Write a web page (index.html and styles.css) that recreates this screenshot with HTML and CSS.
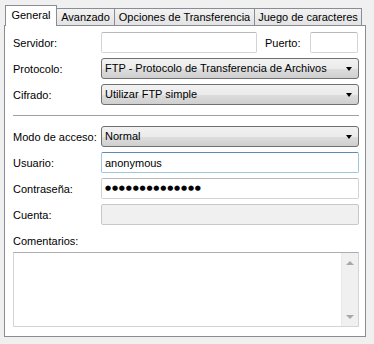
FILE: index.html
```html
<!DOCTYPE html>
<html lang="es">
<head>
  <meta charset="UTF-8">
  <title>Sitio FTP - General</title>
  <link rel="stylesheet" href="styles.css">
</head>
<body>
  <div class="tabs">
    <div class="tab active">General</div>
    <div class="tab">Avanzado</div>
    <div class="tab">Opciones de Transferencia</div>
    <div class="tab">Juego de caracteres</div>
  </div>

  <div class="panel">
    <div class="row">
      <label>Servidor:</label>
      <div class="field split">
        <input class="text host" type="text">
        <label class="port-label">Puerto:</label>
        <input class="text port" type="text">
      </div>
    </div>
    <div class="row">
      <label>Protocolo:</label>
      <div class="select">FTP - Protocolo de Transferencia de Archivos<span class="arrow"></span></div>
    </div>
    <div class="row">
      <label>Cifrado:</label>
      <div class="select">Utilizar FTP simple<span class="arrow"></span></div>
    </div>

    <hr class="sep">

    <div class="row">
      <label>Modo de acceso:</label>
      <div class="select">Normal<span class="arrow"></span></div>
    </div>
    <div class="row">
      <label>Usuario:</label>
      <input class="text focus" type="text" value="anonymous">
    </div>
    <div class="row">
      <label>Contraseña:</label>
      <div class="text dots">●●●●●●●●●●●●●●</div>
    </div>
    <div class="row">
      <label>Cuenta:</label>
      <input class="text disabled" type="text" disabled>
    </div>

    <div class="comments-label">Comentarios:</div>
    <div class="memo">
      <div class="memo-body"></div>
      <div class="scrollbar">
        <span class="up"></span>
        <span class="down"></span>
      </div>
    </div>
  </div>
</body>
</html>
```

FILE: styles.css
```css
body {
  margin: 0;
  padding: 5px 8px 0 4px;
  background-color: #f0f0f0;
  font-family: "Liberation Sans", Arial, sans-serif;
  font-size: 11px;
  color: #000;
  white-space: nowrap;
}
.tabs {
  display: flex;
  align-items: flex-end;
  height: 20px;
  padding-left: 1px;
  position: relative;
  z-index: 1;
}
.tab {
  height: 17px;
  line-height: 16px;
  padding: 0;
  text-align: center;
  border: 1px solid #898c95;
  border-bottom: none;
  margin-left: -1px;
  background: linear-gradient(#f2f2f2, #e3e3e3);
  box-sizing: border-box;
  font-size: 11px;
}
.tab:nth-child(2) { width: 59px; }
.tab:nth-child(3) { width: 141px; }
.tab:nth-child(4) { width: 108px; }
.tab.active {
  height: 21px;
  width: 52px;
  line-height: 19px;
  background: #fff;
  margin-left: 0;
  margin-bottom: -1px;
  border-color: #898c95;
  position: relative;
  z-index: 2;
}
.panel {
  border: 1px solid #898c95;
  background: #fff;
  width: 362px;
  height: 312px;
  box-sizing: border-box;
  padding: 6px 6px 0 8px;
}
.row {
  display: flex;
  align-items: center;
  height: 21px;
  margin-bottom: 5px;
}
.row > label {
  width: 88px;
  flex: none;
}
.field.split {
  display: flex;
  align-items: center;
  flex: 1;
}
.text {
  flex: 1;
  min-width: 0;
  height: 21px;
  border: 1px solid #d4d4d4;
  border-top-color: #b9b9b9;
  border-radius: 2px;
  box-sizing: border-box;
  padding: 0 3px;
  font-family: inherit;
  font-size: 11px;
  background: #fff;
  outline: none;
  margin: 0;
}
.text.host {
  flex: none;
  width: 156px;
}
.port-label {
  margin-left: 8px;
  width: 45px;
}
.text.port {
  flex: none;
  width: 48px;
}
.text.focus {
  border-color: #9fc6e0;
  border-top-color: #5d8bb3;
}
.text.disabled {
  background: #f0f0f0;
  border-color: #c8c8c8;
}
.dots {
  font-family: "DejaVu Sans", sans-serif;
  font-size: 7px;
  line-height: 19px;
  letter-spacing: 0.8px;
}
.select {
  flex: 1;
  position: relative;
  height: 21px;
  line-height: 19px;
  box-sizing: border-box;
  padding: 0 3px;
  border: 1px solid #707070;
  border-radius: 3px;
  background: linear-gradient(#f2f2f2 0%, #ebebeb 50%, #dddddd 51%, #cfcfcf 100%);
}
.arrow {
  position: absolute;
  right: 6px;
  top: 8px;
  border-left: 3.5px solid transparent;
  border-right: 3.5px solid transparent;
  border-top: 4px solid #000;
}
.sep {
  border: none;
  border-top: 1px solid #a0a0a0;
  margin: 10px 0 10px 0;
}
.comments-label {
  margin-top: 10px;
  height: 17px;
}
.memo {
  display: flex;
  height: 75px;
  border: 1px solid #d4d4d4;
  border-top-color: #abadb3;
  box-sizing: border-box;
}
.memo-body {
  flex: 1;
}
.scrollbar {
  width: 17px;
  background: #f0f0f0;
  border-left: 1px solid #e8e8e8;
  display: flex;
  flex-direction: column;
  justify-content: space-between;
  align-items: center;
  padding: 8px 0 7px;
  box-sizing: border-box;
}
.up {
  border-left: 4px solid transparent;
  border-right: 4px solid transparent;
  border-bottom: 4px solid #a8a8a8;
}
.down {
  border-left: 4px solid transparent;
  border-right: 4px solid transparent;
  border-top: 4px solid #a8a8a8;
}
```
